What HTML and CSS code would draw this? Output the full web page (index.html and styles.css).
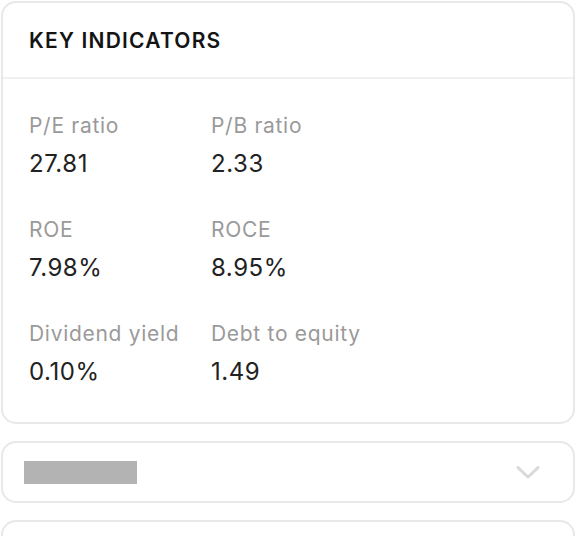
FILE: index.html
```html
<!DOCTYPE html>
<html>
<head>
<meta charset="utf-8">
<link rel="stylesheet" href="styles.css">
</head>
<body>
<div class="stack">
  <section class="card indicators">
    <header class="card-head">
      <h2 class="title">KEY INDICATORS</h2>
    </header>
    <div class="grid">
      <div class="metric"><div class="label">P/E ratio</div><div class="value">27.81</div></div>
      <div class="metric"><div class="label">P/B ratio</div><div class="value">2.33</div></div>
      <div class="metric"><div class="label">ROE</div><div class="value">7.98%</div></div>
      <div class="metric"><div class="label">ROCE</div><div class="value">8.95%</div></div>
      <div class="metric"><div class="label">Dividend yield</div><div class="value">0.10%</div></div>
      <div class="metric"><div class="label">Debt to equity</div><div class="value">1.49</div></div>
    </div>
  </section>
  <section class="card collapsed">
    <div class="placeholder"></div>
    <svg class="chevron" width="30" height="30" viewBox="0 0 24 24"><path d="M4 8.5l8 7.5 8-7.5" fill="none" stroke="#dadada" stroke-width="2.4" stroke-linecap="round" stroke-linejoin="round"/></svg>
  </section>
  <section class="card collapsed"></section>
</div>
</body>
</html>
```

FILE: styles.css
```css
* { box-sizing: border-box; }
html, body { margin: 0; padding: 0; background: #ffffff; }
body {
  padding: 1px;
  font-family: Inter, "Noto Sans", sans-serif;
  color: #1f1f1f;
  width: 576px;
  height: 536px;
  overflow: hidden;
}
.stack {
  display: flex;
  flex-direction: column;
  gap: 17px;
}
.card {
  border: 2px solid #e8e8e8;
  border-radius: 15px;
  background: #fff;
  width: 574px;
}
.card-head {
  padding: 24px 26px 22px;
  border-bottom: 2px solid #f0f0f0;
}
.title {
  margin: 0;
  font-size: 21px;
  line-height: 28px;
  font-weight: 600;
  color: #141414;
  letter-spacing: 1.2px;
}
.grid {
  display: grid;
  grid-template-columns: 182px 182px;
  row-gap: 36px;
  padding: 33px 26px 34px;
}
.label {
  font-size: 21px;
  line-height: 28px;
  color: #9a9a9a;
  letter-spacing: 0.7px;
}
.value {
  margin-top: 8px;
  font-size: 24px;
  line-height: 32px;
  color: #222;
  letter-spacing: 0.55px;
}
.collapsed {
  height: 62px;
  display: flex;
  align-items: center;
  justify-content: space-between;
  padding: 0 30px 0 21px;
}
.placeholder {
  width: 113px;
  height: 23px;
  background: #b3b3b3;
}
.chevron { display: block; }
```
